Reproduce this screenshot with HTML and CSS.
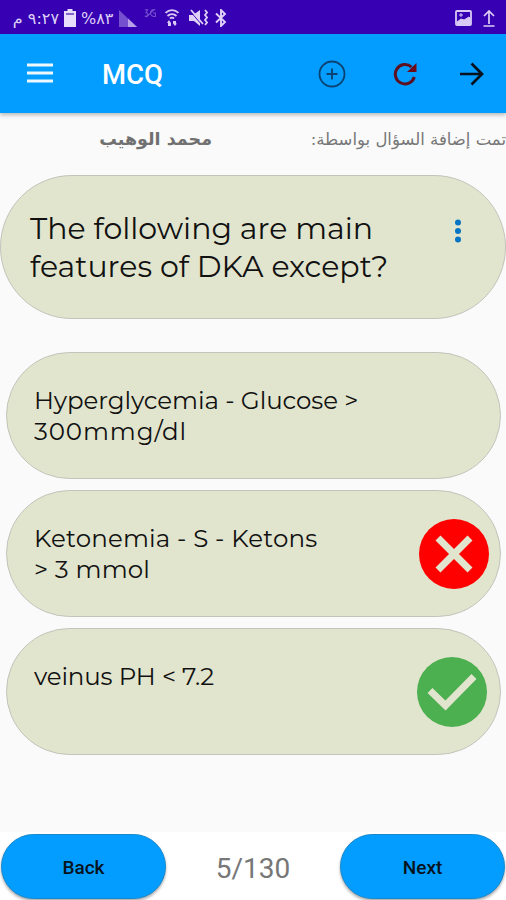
FILE: index.html
```html
<!DOCTYPE html>
<html lang="en">
<head>
<meta charset="utf-8">
<title>MCQ</title>
<link rel="stylesheet" href="styles.css">
</head>
<body>
<div class="status">
  <span class="clock" dir="rtl">٩:٢٧ م</span>
  <svg class="battery" width="12" height="18" viewBox="0 0 12 18"><path d="M3.500 0h5v2H12v16H0V2h3.500z" fill="#e8ddfa"/><path d="M2 4h8v2H2z" fill="#8664cf"/></svg>
  <span class="percent" dir="ltr">%٨٣</span>
  <svg class="signal" width="18" height="17" viewBox="0 0 18 17"><path d="M0 0 18 17H0z" fill="#7450ce"/><path d="M9 8.500 18 17H9z" fill="#b8a1e9"/></svg>
  <svg class="mobile" width="13" height="9" viewBox="0 0 14 11" fill="none" stroke="#7650ce" stroke-width="1.300"><path d="M0 1h3.500L1.500 4.500C5 5 5 9 0 9M13 1C8 0 7 3 7 5s2 5 6 4V5h-3M2 10 11 1"/></svg>
  <svg class="wifi" width="14" height="18" viewBox="0 0 14 18" fill="none" stroke="#d8c9f5" stroke-width="1.800"><path d="M.5 4C4 .2 10 .2 13.500 4M2.500 7c2.500-2.500 6.500-2.500 9 0M5 9.500c1.200-1.200 2.800-1.200 4 0"/><path d="m2 14 2-3 2 3v3H3v-3zM8 14.500V12h3v2.500h1L10 17z" fill="#d8c9f5" stroke="none"/></svg>
  <svg class="mute" width="19" height="18" viewBox="0 0 19 18"><path d="M0 6h4l7-5v16l-6-5H0z" fill="#ded0f6"/><path d="m1 2 12 14" fill="none" stroke="#3700b3" stroke-width="1"/><path d="m2 1 12 14M16 1l2 2.500-2 2.500 2 2.500-2 2.500 2 2.500-2 2.500" fill="none" stroke="#ded0f6" stroke-width="1.800"/></svg>
  <svg class="bluetooth" width="12" height="18" viewBox="0 0 12 18"><path d="m1 4.500 9 8.500-4 4V1l4 4-9 8.500" fill="none" stroke="#ded0f6" stroke-width="1.900"/></svg>
  <svg class="picture" width="17" height="16" viewBox="0 0 17 16"><rect x="1" y="1" width="15" height="14" rx="1" fill="none" stroke="#d9c9f5" stroke-width="1.800"/><path d="m2 12 4-3 3 1 5-3 1 1v6H2zM6 3v4M4 5h4" fill="#d9c9f5" stroke="#d9c9f5"/></svg>
  <svg class="upload" width="12" height="17" viewBox="0 0 12 17" fill="none" stroke="#ded0f6" stroke-width="1.700"><path d="M6 14V1M1 6l5-5 5 5M.5 16h11"/></svg>
</div>
<header class="appbar">
  <svg class="menu" width="26" height="20" viewBox="0 0 26 20"><path d="M0 2h26M0 10h26M0 18h26" stroke="#eef8ff" stroke-width="3"/></svg>
  <h1>MCQ</h1>
  <svg class="add" width="28" height="28" viewBox="0 0 28 28" fill="none" stroke="#0b4270" stroke-width="1.800"><circle cx="14" cy="14" r="12.500"/><path d="M14 8.500v11M8.500 14h11"/></svg>
  <svg class="refresh" width="24" height="24" viewBox="0 0 24 24"><path d="M18.500 5A9.700 9.700 0 1 0 21.300 15" fill="none" stroke="#5d1020" stroke-width="3"/><path d="M23.500 1v9H14z" fill="#6d0c18"/></svg>
  <svg class="forward" width="24" height="24" viewBox="0 0 24 24" fill="none" stroke="#07121c" stroke-width="2.700"><path d="M0 12h21.500M11.500 1.500 22 12 11.500 22.500"/></svg>
</header>
<div class="credit" dir="rtl"><span class="label">تمت إضافة السؤال بواسطة:</span><span class="author">محمد الوهيب</span></div>
<main>
  <section class="question">
    <div class="lines"><span>The following are main</span><span>features of DKA except?</span></div>
    <svg class="more" width="8" height="24" viewBox="0 0 8 24" fill="#0874c4"><circle cx="4" cy="3.500" r="3"/><circle cx="4" cy="12" r="3"/><circle cx="4" cy="20.500" r="3"/></svg>
  </section>
  <div class="options">
    <div class="option"><div class="lines"><span class="glucose">Hyperglycemia - Glucose &gt;</span><span class="amount">300mmg/dl</span></div></div>
    <div class="option"><div class="lines"><span class="ketons">Ketonemia - S - Ketons</span><span class="ketons">&gt; 3 mmol</span></div>
      <svg class="wrong" width="70" height="70" viewBox="0 0 70 70"><circle cx="35" cy="35" r="35" fill="#f00"/><path d="m19 19 32 32m0-32L19 51" stroke="#e2e5ce" stroke-width="7"/></svg></div>
    <div class="option"><div class="lines"><span class="ph">veinus PH &lt; 7.2</span></div>
      <svg class="right" width="70" height="70" viewBox="0 0 70 70"><circle cx="35" cy="35" r="35" fill="#4caf50"/><path d="m13 33.500 15.500 15L57 19.500" fill="none" stroke="#e2e5ce" stroke-width="7"/></svg></div>
  </div>
</main>
<footer><button>Back</button><span class="count">5/130</span><button>Next</button></footer>
</body>
</html>
```
FILE: styles.css
```css
* { box-sizing: border-box; }
body { margin: 0; width: 506px; height: 900px; overflow: hidden; background: #fafafa; font-family: Roboto, sans-serif; display: flex; flex-direction: column; }
svg { display: block; flex: none; }
.status { height: 34px; flex: none; background: #3700b3; color: #ded0f6; display: flex; align-items: center; padding: 2px 11px 0 12px; font: 16px "DejaVu Sans", sans-serif; white-space: nowrap; }
.clock { width: 47px; }
.battery { margin-left: 5px; }
.percent { width: 33px; margin-left: 5px; font-size: 16px; }
.signal { margin-left: 5px; }
.mobile { margin: -9px 0 0 7px; }
.wifi { margin-left: 8px; }
.mute { margin-left: 10px; }
.bluetooth { margin-left: 7px; }
.picture { margin-left: auto; }
.upload { margin-left: 11px; }
.appbar { height: 79px; flex: none; background: #039dff; box-shadow: 0 2px 4px #0004; display: flex; align-items: center; padding: 0 22px 0 27px; }
.menu { margin-top: -1px; }
h1 { margin: 2px 0 0 49px; color: #fff; font-size: 27.500px; font-weight: 500; line-height: 32px; }
.add { margin-left: auto; }
.refresh { margin-left: 47px; }
.forward { margin-left: 43px; }
.credit { height: 62px; flex: none; display: flex; padding-top: 14px; color: #777; font: 16.500px/25px "DejaVu Sans", sans-serif; white-space: nowrap; }
.label { width: 195px; }
.author { margin-right: 99px; font-weight: bold; font-size: 17.500px; color: #707070; }
main { flex: 1; }
.question, .option { background: #e2e5ce; border: 1.500px solid #c2c4bb; border-radius: 72px; display: flex; font-family: Montserrat, Inter, sans-serif; color: #111; }
.question { height: 144px; padding: 34px 43px 0 29px; justify-content: space-between; font-size: 30px; line-height: 38px; }
.lines { display: flex; flex-direction: column; align-items: flex-start; white-space: nowrap; }
.more { margin-top: 9px; }
.options { padding: 33px 5px 0 6px; display: grid; gap: 11px; }
.option { height: 127px; padding: 32px 11px 0 27px; justify-content: space-between; font-size: 24.500px; line-height: 31px; }
.glucose { letter-spacing: -0.070px; }
.amount { letter-spacing: 0.900px; }
.ketons { letter-spacing: 0.180px; }
.ph { letter-spacing: -0.150px; }
.wrong { margin-top: -4px; }
.right { margin: -4px 2px 0 0; }
footer { height: 68px; flex: none; background: #fff; display: flex; justify-content: space-between; padding: 2px 1px 0; }
button { width: 165px; height: 65px; border: 1px solid #1689d0; border-radius: 33px; background: #039dff; box-shadow: 0 2px 3px #0005; color: #07131d; font: 500 19px Roboto, sans-serif; padding: 2px 0 0; }
.count { color: #777; font-size: 28px; line-height: 70px; }
```
